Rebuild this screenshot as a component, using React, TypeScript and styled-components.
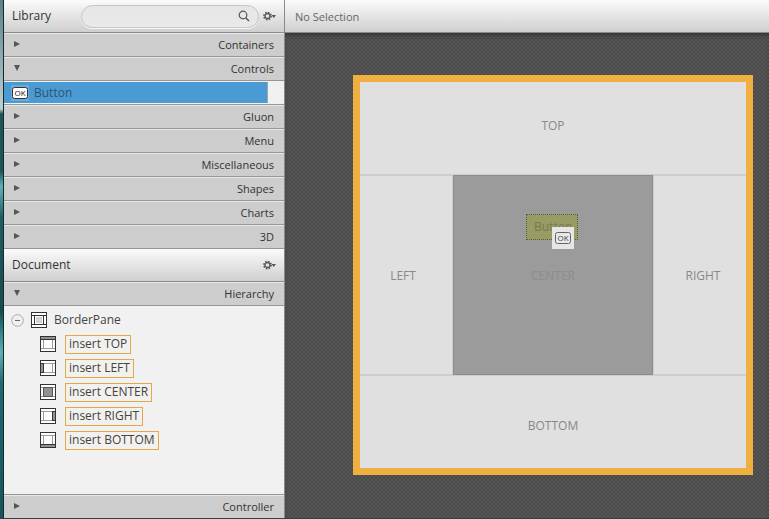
import React from 'react';
import styled, { createGlobalStyle, css } from 'styled-components';

const GlobalStyle = createGlobalStyle`
  * { box-sizing: border-box; }
  html, body, #root { height: 100%; margin: 0; }
  body {
    font-family: "Open Sans", "Noto Sans", sans-serif;
    font-size: 12px;
    color: #333;
    background: #4f4f4f;
    overflow: hidden;
  }
  button, input { font: inherit; color: inherit; }
`;

const barSurface = css`
  background: linear-gradient(#fbfbfb, #cfcfcf);
  border-bottom: 1px solid #8a8a8a;
`;

const Window = styled.div`
  display: flex;
  height: 100vh;
  border-bottom: 1px solid #24484c;
`;

const DesktopEdge = styled.div`
  flex: 0 0 4px;
  border-right: 1px solid #16292b;
  background: linear-gradient(#5c8085 0, #b7cdd0 20%, #b7cdd0 21%, #1d5458 22%, #1d5458 33%, #5fb3b8 36%, #1f5d62 42%, #174a4f 60%, #2c8387 64%, #5fb0b5 68%, #1f6a70 74%, #17545a 100%);
`;

const Sidebar = styled.aside`
  flex: 0 0 281px;
  display: flex;
  flex-direction: column;
  border-right: 1px solid #8a8a8a;
  background: #f1f1f1;
`;

const PanelHeader = styled.header`
  ${barSurface}
  flex: 0 0 33px;
  display: flex;
  align-items: center;
  padding: 0 8px;
`;

const PanelTitle = styled.h2`
  flex: 1;
  margin: 0;
  font-size: 12px;
  font-weight: 400;
  line-height: 16px;
`;

const SearchBox = styled.label`
  flex: 0 0 178px;
  min-width: 0;
  display: flex;
  align-items: center;
  height: 23px;
  margin-right: 4px;
  padding: 0 8px 0 12px;
  border: 1px solid #c6c6c6;
  border-radius: 12px;
  background: linear-gradient(#e6e6e6, #e9e9e9);
  box-shadow: 0 1px 0 #f6f6f6;
`;

const SearchInput = styled.input`
  flex: 1;
  min-width: 0;
  border: 0;
  padding: 0;
  outline: 0;
  background: none;
`;

const IconButton = styled.button`
  display: flex;
  padding: 0;
  border: 0;
  background: none;
`;

const SectionButton = styled.button`
  flex: 0 0 24px;
  display: flex;
  align-items: center;
  justify-content: space-between;
  padding: 0 10px;
  border: 0;
  border-top: 1px solid #e8e8e8;
  border-bottom: 1px solid #969696;
  background: #cdcdcd;
  font-size: 11px;
  line-height: 16px;
`;

const LibraryRow = styled.div`
  flex: 0 0 24px;
  display: flex;
  padding: 1px 16px 1px 0;
  border-bottom: 1px solid #969696;
`;

const LibraryItem = styled.button`
  flex: 1;
  display: flex;
  align-items: center;
  gap: 5px;
  padding: 0 7px;
  border: 0;
  border-right: 1px solid #9aa7b0;
  background: #4a9ad4;
  color: #34536b;
`;

const Tree = styled.ul`
  flex: 1;
  margin: 0;
  padding: 2px 0 0;
  list-style: none;
`;

const TreeRow = styled.li<{ $level: number }>`
  display: flex;
  align-items: center;
  height: 24px;
  padding-left: ${(p) => (p.$level === 0 ? 7 : 36)}px;
  color: #444;
`;

const ToggleButton = styled(IconButton)`
  margin-right: 7px;
`;

const NodeName = styled.span`
  margin-left: 7px;
  line-height: 18px;
`;

const InsertSlot = styled.button`
  margin-left: 9px;
  height: 19px;
  padding: 0 3px;
  border: 1px solid #e3a84a;
  background: #f3f1ee;
  line-height: 16px;
  color: #444;
`;

const BottomSection = styled(SectionButton)`
  border-top: 1px solid #969696;
  border-bottom: 0;
  box-shadow: inset 0 1px 0 #e8e8e8;
`;

const Editor = styled.main`
  flex: 1;
  min-width: 0;
  display: flex;
  flex-direction: column;
`;

const SelectionBar = styled.div`
  ${barSurface}
  flex: 0 0 33px;
  display: flex;
  align-items: center;
  padding: 0 10px;
  font-size: 11px;
  color: #666;
`;

const Workspace = styled.div`
  flex: 1;
  display: flex;
  align-items: center;
  justify-content: flex-end;
  padding: 0 16px 1px 0;
  background: conic-gradient(#4a4a4a 25%, #565656 0 50%, #4a4a4a 0 75%, #565656 0) 0 0 / 4px 4px;
  box-shadow: inset 0 4px 4px -2px #333;
`;

const BorderPane = styled.section`
  width: 400px;
  height: 400px;
  display: grid;
  grid-template: 1fr 2fr 1fr / 1fr 2fr 1fr;
  outline: 7px solid #efb040;
  outline-offset: -7px;
  background: #e0e0e0;
  color: #888;
`;

const Region = styled.div<{ $wide?: boolean }>`
  grid-column: ${(p) => (p.$wide ? '1 / -1' : 'auto')};
  display: flex;
  align-items: center;
  justify-content: center;
  box-shadow: inset 0 0 0 1px #cdcdcd;
`;

const CenterRegion = styled(Region)`
  position: relative;
  background: #9b9b9b;
  box-shadow: inset 0 0 0 1px #8c8c8c;
  color: #8d8d8d;
`;

const DragGhost = styled.div`
  position: absolute;
  top: 39px;
  left: 73px;
  width: 52px;
  height: 26px;
  padding-left: 7px;
  border: 1px dotted #5f6137;
  background: #999b65;
  line-height: 24px;
  color: #777950;
`;

const DragCursor = styled.div`
  position: absolute;
  top: 12px;
  left: 25px;
  display: flex;
  padding: 3px 2px;
  background: #e6e6e6;
`;

const ButtonIcon = ({ faded = false }: { faded?: boolean }) => (
  <svg width="18" height="16" viewBox="0 0 18 16" aria-hidden="true">
    {!faded && <rect width="18" height="16" fill="#6fa9d8" />}
    <rect x="1.5" y="2.5" width="15" height="11" rx="2" fill={faded ? '#e8e8e8' : '#fff'} stroke={faded ? '#666' : '#333'} />
    <text x="9" y="11" textAnchor="middle" fontFamily="Open Sans, sans-serif" fontSize="8" fill={faded ? '#444' : '#111'}>OK</text>
  </svg>
);

const Arrow = ({ open }: { open?: boolean }) => (
  <svg width="6" height="8" viewBox="0 0 6 8" aria-hidden="true">
    <path d={open ? 'M0 0h6L3 6z' : 'M0 0v6l6-3z'} fill="#555" />
  </svg>
);

const Gear = () => (
  <svg width="13" height="10" viewBox="0 0 13 10" aria-hidden="true">
    <circle cx="4.500" cy="5" r="3.600" fill="none" stroke="#555" strokeWidth="1.600" strokeDasharray="1.500 1.330" />
    <circle cx="4.500" cy="5" r="2.500" fill="none" stroke="#555" strokeWidth="1.300" />
    <path d="M8.500 4h4.500l-2.250 3z" fill="#555" />
  </svg>
);

const Magnifier = () => (
  <svg width="12" height="12" viewBox="0 0 12 12" aria-hidden="true">
    <circle cx="5" cy="5" r="3.800" fill="none" stroke="#555" strokeWidth="1.200" />
    <path d="M7.700 7.700l3.300 3.300" stroke="#555" strokeWidth="1.500" />
  </svg>
);

const Collapse = () => (
  <svg width="13" height="13" viewBox="0 0 13 13" aria-hidden="true">
    <circle cx="6.500" cy="6.500" r="5.800" fill="#f0f0f0" stroke="#aaa" />
    <path d="M4 6.500h5" stroke="#666" />
  </svg>
);

type Place = 'PANE' | 'TOP' | 'LEFT' | 'CENTER' | 'RIGHT' | 'BOTTOM';

const fills: Record<Place, string> = {
  PANE: 'M5 5h6v6h-6z',
  TOP: 'M1 1h14v2h-14z',
  LEFT: 'M1 4h2v8h-2z',
  CENTER: 'M4 4h8v8h-8z',
  RIGHT: 'M13 4h2v8h-2z',
  BOTTOM: 'M1 13h14v2h-14z',
};

const edges: Record<Place, string> = {
  PANE: 'M1 3.500h14M1 12.500h14M3.500 3v10M12.500 3v10',
  TOP: 'M1 3.500h14',
  LEFT: 'M1 3.500h2M1 12.500h2M3.500 3v10',
  CENTER: 'M3.500 3.500h9v9h-9z',
  RIGHT: 'M13 3.500h2M13 12.500h2M12.500 3v10',
  BOTTOM: 'M1 12.500h14',
};

const PaneIcon = ({ place }: { place: Place }) => (
  <svg width="16" height="16" viewBox="0 0 16 16" aria-hidden="true">
    <rect x="0.500" y="0.500" width="15" height="15" fill="#fff" stroke="#333" />
    <path d="M1 3.500h14M1 12.500h14M3.500 3v10M12.500 3v10" stroke="#999" />
    <path d={fills[place]} fill={place === 'PANE' ? '#d3d3d3' : '#929292'} />
    <path d={edges[place]} fill="none" stroke={place === 'CENTER' ? '#555' : '#333'} />
  </svg>
);

const Section = ({ name, open }: { name: string; open?: boolean }) => (
  <SectionButton aria-expanded={!!open}>
    <Arrow open={open} />
    <span>{name}</span>
  </SectionButton>
);

const closedSections = ['Gluon', 'Menu', 'Miscellaneous', 'Shapes', 'Charts', '3D'];
const slots: Place[] = ['TOP', 'LEFT', 'CENTER', 'RIGHT', 'BOTTOM'];

export default function App() {
  return (
    <>
      <GlobalStyle />
      <Window>
        <DesktopEdge />
        <Sidebar>
          <PanelHeader>
            <PanelTitle>Library</PanelTitle>
            <SearchBox>
              <SearchInput type="text" aria-label="Search library" />
              <Magnifier />
            </SearchBox>
            <IconButton aria-label="Library options"><Gear /></IconButton>
          </PanelHeader>
          <Section name="Containers" />
          <Section name="Controls" open />
          <LibraryRow>
            <LibraryItem>
              <ButtonIcon />
              <span>Button</span>
            </LibraryItem>
          </LibraryRow>
          {closedSections.map((name) => <Section key={name} name={name} />)}
          <PanelHeader>
            <PanelTitle>Document</PanelTitle>
            <IconButton aria-label="Document options"><Gear /></IconButton>
          </PanelHeader>
          <Section name="Hierarchy" open />
          <Tree>
            <TreeRow $level={0}>
              <ToggleButton aria-label="Collapse BorderPane"><Collapse /></ToggleButton>
              <PaneIcon place="PANE" />
              <NodeName>BorderPane</NodeName>
            </TreeRow>
            {slots.map((slot) => (
              <TreeRow key={slot} $level={1}>
                <PaneIcon place={slot} />
                <InsertSlot>insert {slot}</InsertSlot>
              </TreeRow>
            ))}
          </Tree>
          <BottomSection aria-expanded={false}>
            <Arrow />
            <span>Controller</span>
          </BottomSection>
        </Sidebar>
        <Editor>
          <SelectionBar>No Selection</SelectionBar>
          <Workspace>
            <BorderPane>
              <Region $wide>TOP</Region>
              <Region>LEFT</Region>
              <CenterRegion>
                CENTER
                <DragGhost>
                  Button
                  <DragCursor><ButtonIcon faded /></DragCursor>
                </DragGhost>
              </CenterRegion>
              <Region>RIGHT</Region>
              <Region $wide>BOTTOM</Region>
            </BorderPane>
          </Workspace>
        </Editor>
      </Window>
    </>
  );
}
